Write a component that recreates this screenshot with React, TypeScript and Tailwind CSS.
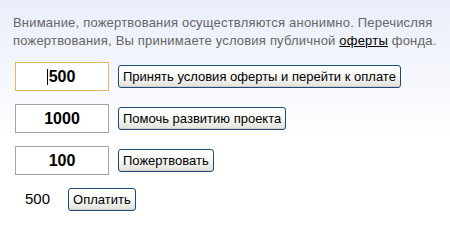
import { useState } from 'react'

const rows = [
  { amount: '500', label: 'Принять условия оферты и перейти к оплате', focused: true },
  { amount: '1000', label: 'Помочь развитию проекта' },
  { amount: '100', label: 'Пожертвовать' },
]

function XpButton({ children }: { children: React.ReactNode }) {
  return (
    <button
      type="button"
      className="h-[23px] rounded-[3px] border border-[#1c4a7c] bg-gradient-to-b from-white via-[#f7f7f4] to-[#e2e2dc] px-[4px] font-['Liberation_Sans',Tahoma,sans-serif] text-[13px] leading-none text-black shadow-[inset_0_-1px_0_#d6d0c4]"
    >
      {children}
    </button>
  )
}

export default function App() {
  const [values, setValues] = useState(rows.map((r) => r.amount))

  return (
    <div className="h-[235px] w-[450px] bg-gradient-to-b from-[#e9eef9] to-white to-60% pl-[13px] pt-[14px] font-['Liberation_Sans',Tahoma,sans-serif]">
      <p className="text-[13px] leading-[18px] tracking-[0.2px] text-[#666]">
        Внимание, пожертвования осуществляются анонимно. Перечисляя
        <br />
        пожертвования, Вы принимаете условия публичной{' '}
        <a href="#" className="text-black underline">
          оферты
        </a>{' '}
        фонда.
      </p>

      <div className="mt-[12px] flex flex-col gap-[13px] pl-[2px]">
        {rows.map((row, i) => (
          <div key={row.label} className="flex items-center gap-[9px]">
            <div className="relative">
              <input
                value={values[i]}
                onChange={(e) =>
                  setValues((v) => v.map((x, j) => (j === i ? e.target.value : x)))
                }
                className={
                  'h-[29px] w-[94px] border bg-white text-center font-["Liberation_Sans",Arial,sans-serif] text-[16px] font-bold text-black outline-none ' +
                  (row.focused ? 'border-[#e5b860]' : 'border-[#a5a5a5]')
                }
              />
              {row.focused && (
                <span className="absolute left-[32px] top-[7px] h-[16px] w-px bg-black" />
              )}
            </div>
            <XpButton>{row.label}</XpButton>
          </div>
        ))}

        <div className="flex items-center gap-[18px] pl-[10px]">
          <span className="text-[15px] text-black">500</span>
          <XpButton>Оплатить</XpButton>
        </div>
      </div>
    </div>
  )
}
